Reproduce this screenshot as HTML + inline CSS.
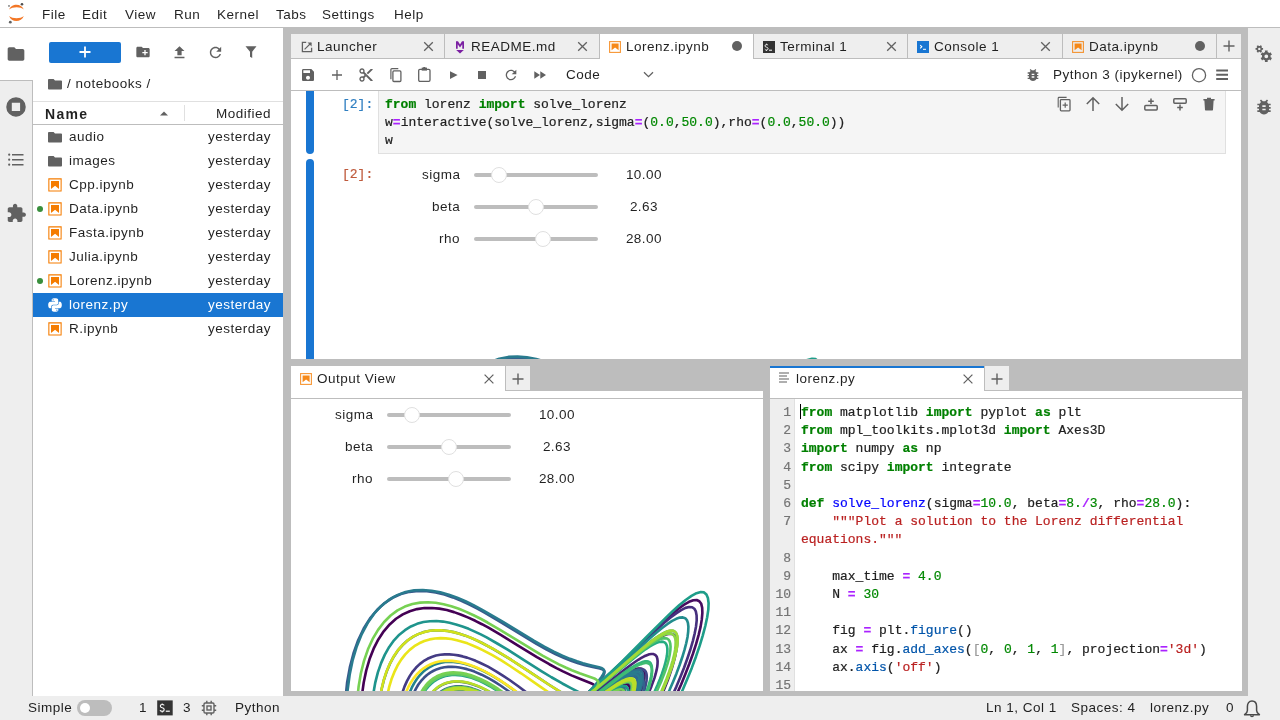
<!DOCTYPE html>
<html><head><meta charset="utf-8">
<style>
*{box-sizing:border-box;margin:0;padding:0}
html,body{width:1280px;height:720px;overflow:hidden;background:#bdbdbd;font-family:"Liberation Sans",sans-serif;font-size:13px;color:rgba(0,0,0,.87)}
.a{position:absolute}
.t{will-change:transform;position:absolute;white-space:pre;letter-spacing:.49px;line-height:24px;height:24px;font-size:13.5px;margin-top:1px}
.t.m{font-family:"Liberation Mono",monospace;letter-spacing:0;white-space:pre;font-size:13px;margin-top:2px;-webkit-text-stroke:.2px}
svg{position:absolute;overflow:visible}
.ic{fill:#616161}
</style></head><body>

<!-- menu bar -->
<div class="a" style="left:0;top:0;width:1280px;height:28px;background:#fff;border-bottom:1px solid #bdbdbd"></div>

<svg style="left:0;top:0" width="32" height="28" viewBox="0 0 32 28">
<path d="M9.2 9.6 C11 3.2 21.5 3.0 23.8 9.4 C20.5 6.6 12.5 6.6 9.2 9.6 Z" fill="#f37726"/>
<path d="M9.2 16.0 C12.5 19.0 20.5 19.0 23.8 16.0 C21.5 22.6 11 22.6 9.2 16.0 Z" fill="#f37726"/>
<circle cx="22" cy="4.2" r="1.3" fill="#4e4e4e"/>
<circle cx="9" cy="5.9" r="0.9" fill="#767677"/>
<circle cx="10.3" cy="22.2" r="1.4" fill="#616262"/>
</svg>
<div class="t" style="left:42px;top:1px;line-height:26px">File</div>
<div class="t" style="left:82px;top:1px;line-height:26px">Edit</div>
<div class="t" style="left:125px;top:1px;line-height:26px">View</div>
<div class="t" style="left:174px;top:1px;line-height:26px">Run</div>
<div class="t" style="left:217px;top:1px;line-height:26px">Kernel</div>
<div class="t" style="left:276px;top:1px;line-height:26px">Tabs</div>
<div class="t" style="left:322px;top:1px;line-height:26px">Settings</div>
<div class="t" style="left:394px;top:1px;line-height:26px">Help</div>


<!-- left activity bar -->
<div class="a" style="left:0;top:28px;width:33px;height:668px;background:#eee;border-right:1px solid #bdbdbd"></div>
<div class="a" style="left:0;top:28px;width:33px;height:53px;background:#fff;border-bottom:1px solid #bdbdbd"></div>

<!-- file browser -->
<div class="a" style="left:33px;top:28px;width:250px;height:668px;background:#fff"></div>
<svg style="left:6px;top:43.5px" width="20" height="20" viewBox="0 0 24 24"><path class="ic" d="M10 4H4c-1.1 0-1.99.9-1.99 2L2 18c0 1.1.9 2 2 2h16c1.1 0 2-.9 2-2V8c0-1.1-.9-2-2-2h-8l-2-2z"/></svg><svg style="left:6px;top:97px" width="20" height="20" viewBox="0 0 20 20"><path fill="#616161" fill-rule="evenodd" d="M10 0.2A9.75 9.75 0 1 1 10 19.7A9.75 9.75 0 1 1 10 0.2ZM5.8 5.8V14.1H14.1V5.8Z"/></svg><svg style="left:7px;top:151px" width="18" height="18" viewBox="0 0 18 18"><g fill="#616161"><circle cx="2.2" cy="3.7" r="1.1"/><circle cx="2.2" cy="8.7" r="1.1"/><circle cx="2.2" cy="13.7" r="1.1"/><rect x="5" y="3" width="11.5" height="1.5"/><rect x="5" y="8" width="11.5" height="1.5"/><rect x="5" y="13" width="11.5" height="1.5"/></g></svg><svg style="left:6.3px;top:203px" width="20.8" height="20.8" viewBox="0 0 24 24"><path class="ic" d="M20.5 11H19V7c0-1.1-.9-2-2-2h-4V3.5C13 2.12 11.88 1 10.5 1S8 2.12 8 3.5V5H4c-1.1 0-1.99.9-1.99 2v3.8H3.5c1.49 0 2.7 1.21 2.7 2.7s-1.21 2.7-2.7 2.7H2V20c0 1.1.9 2 2 2h3.8v-1.5c0-1.49 1.21-2.7 2.7-2.7 1.49 0 2.7 1.21 2.7 2.7V22H17c1.1 0 2-.9 2-2v-4h1.5c1.38 0 2.5-1.12 2.5-2.5S21.88 11 20.5 11z"/></svg><div class="a" style="left:49px;top:42px;width:72px;height:21px;background:#1976d2;border-radius:2px"></div><svg style="left:77px;top:44px" width="16" height="16" viewBox="0 0 16 16"><path d="M8 2.5v11M2.5 8h11" stroke="#fff" stroke-width="1.8"/></svg><svg style="left:134.7px;top:44.1px" width="16" height="16" viewBox="0 0 24 24"><path class="ic" d="M20 6h-8l-2-2H4c-1.11 0-1.99.89-1.99 2L2 18c0 1.11.89 2 2 2h16c1.11 0 2-.89 2-2V8c0-1.11-.89-2-2-2zm-1 8h-3v3h-2v-3h-3v-2h3V9h2v3h3v2z"/></svg><svg style="left:170.5px;top:43.9px" width="17" height="17" viewBox="0 0 24 24"><path class="ic" d="M9 16h6v-6h4l-7-7-7 7h4zm-4 2h14v2H5z"/></svg><svg style="left:206.5px;top:43.7px" width="17" height="17" viewBox="0 0 24 24"><path class="ic" d="M17.65 6.35C16.2 4.9 14.21 4 12 4c-4.42 0-7.99 3.58-7.99 8s3.57 8 7.99 8c3.73 0 6.84-2.55 7.73-6h-2.08c-.82 2.33-3.04 4-5.65 4-3.31 0-6-2.69-6-6s2.69-6 6-6c1.66 0 3.14.69 4.22 1.78L13 11h7V4l-2.35 2.35z"/></svg><svg style="left:243px;top:44px" width="16" height="16" viewBox="0 0 16 16"><path class="ic" d="M2.5 2.2h11l-4.3 5.5v6.2l-2.2 -1.2v-5z"/></svg><svg style="left:48.2px;top:78.6px" width="14" height="10.5" viewBox="0 0 14 10.5"><path fill="#616161" d="M0.9 0H5.6L7 1.4H13.1Q14 1.4 14 2.3V9.6Q14 10.5 13.1 10.5H0.9Q0 10.5 0 9.6V0.9Q0 0 0.9 0Z"/></svg><div class="t" style="left:67px;top:71px">/ notebooks /</div><div class="a" style="left:33px;top:101px;width:250px;height:24px;border-top:1px solid #e0e0e0;border-bottom:1px solid #bdbdbd"></div><div class="t" style="left:45px;top:101px;font-weight:bold;letter-spacing:1.3px;font-size:14px">Name</div><svg style="left:159px;top:109px" width="10" height="8" viewBox="0 0 10 8"><path d="M1 6.5L5 2.5L9 6.5z" fill="#616161"/></svg><div class="a" style="left:184px;top:105px;width:1px;height:16px;background:#e0e0e0"></div><div class="t" style="right:1009px;top:101px">Modified</div><svg style="left:48px;top:131.8px" width="14" height="10.5" viewBox="0 0 14 10.5"><path fill="#616161" d="M0.9 0H5.6L7 1.4H13.1Q14 1.4 14 2.3V9.6Q14 10.5 13.1 10.5H0.9Q0 10.5 0 9.6V0.9Q0 0 0.9 0Z"/></svg><div class="t" style="left:69px;top:124px;color:rgba(0,0,0,.87)">audio</div><div class="t" style="right:1009px;top:124px;color:rgba(0,0,0,.87)">yesterday</div><svg style="left:48px;top:155.6px" width="14" height="10.5" viewBox="0 0 14 10.5"><path fill="#616161" d="M0.9 0H5.6L7 1.4H13.1Q14 1.4 14 2.3V9.6Q14 10.5 13.1 10.5H0.9Q0 10.5 0 9.6V0.9Q0 0 0.9 0Z"/></svg><div class="t" style="left:69px;top:148px;color:rgba(0,0,0,.87)">images</div><div class="t" style="right:1009px;top:148px;color:rgba(0,0,0,.87)">yesterday</div><svg style="left:47px;top:177px" width="16" height="16" viewBox="0 0 22 22"><g fill="#f57c00"><path d="M18.7 3.3v15.4H3.3V3.3h15.4m1.5-1.5H1.8v18.3h18.3l.1-18.3z"/><path d="M16.5 16.5l-5.4-4.3-5.6 4.3v-11h11z"/></g></svg><div class="t" style="left:69px;top:172px;color:rgba(0,0,0,.87)">Cpp.ipynb</div><div class="t" style="right:1009px;top:172px;color:rgba(0,0,0,.87)">yesterday</div><div class="a" style="left:37px;top:206px;width:6px;height:6px;border-radius:3px;background:#388e3c"></div><svg style="left:47px;top:201px" width="16" height="16" viewBox="0 0 22 22"><g fill="#f57c00"><path d="M18.7 3.3v15.4H3.3V3.3h15.4m1.5-1.5H1.8v18.3h18.3l.1-18.3z"/><path d="M16.5 16.5l-5.4-4.3-5.6 4.3v-11h11z"/></g></svg><div class="t" style="left:69px;top:196px;color:rgba(0,0,0,.87)">Data.ipynb</div><div class="t" style="right:1009px;top:196px;color:rgba(0,0,0,.87)">yesterday</div><svg style="left:47px;top:225px" width="16" height="16" viewBox="0 0 22 22"><g fill="#f57c00"><path d="M18.7 3.3v15.4H3.3V3.3h15.4m1.5-1.5H1.8v18.3h18.3l.1-18.3z"/><path d="M16.5 16.5l-5.4-4.3-5.6 4.3v-11h11z"/></g></svg><div class="t" style="left:69px;top:220px;color:rgba(0,0,0,.87)">Fasta.ipynb</div><div class="t" style="right:1009px;top:220px;color:rgba(0,0,0,.87)">yesterday</div><svg style="left:47px;top:249px" width="16" height="16" viewBox="0 0 22 22"><g fill="#f57c00"><path d="M18.7 3.3v15.4H3.3V3.3h15.4m1.5-1.5H1.8v18.3h18.3l.1-18.3z"/><path d="M16.5 16.5l-5.4-4.3-5.6 4.3v-11h11z"/></g></svg><div class="t" style="left:69px;top:244px;color:rgba(0,0,0,.87)">Julia.ipynb</div><div class="t" style="right:1009px;top:244px;color:rgba(0,0,0,.87)">yesterday</div><div class="a" style="left:37px;top:278px;width:6px;height:6px;border-radius:3px;background:#388e3c"></div><svg style="left:47px;top:273px" width="16" height="16" viewBox="0 0 22 22"><g fill="#f57c00"><path d="M18.7 3.3v15.4H3.3V3.3h15.4m1.5-1.5H1.8v18.3h18.3l.1-18.3z"/><path d="M16.5 16.5l-5.4-4.3-5.6 4.3v-11h11z"/></g></svg><div class="t" style="left:69px;top:268px;color:rgba(0,0,0,.87)">Lorenz.ipynb</div><div class="t" style="right:1009px;top:268px;color:rgba(0,0,0,.87)">yesterday</div><div class="a" style="left:33px;top:293px;width:250px;height:24px;background:#1976d2"></div><svg style="left:47px;top:297px" width="16" height="16" viewBox="0 0 16 16"><g fill="#fff"><path d="M7.9 1.2c-3.4 0-3.2 1.5-3.2 1.5v1.5h3.3v.5H3.4S1.2 4.4 1.2 7.9s1.9 3.3 1.9 3.3h1.2V9.6s-.1-1.9 1.9-1.9h3.2s1.8 0 1.8-1.8V2.9s.3-1.7-3.3-1.7zM6.1 2.2c.3 0 .6.3.6.6s-.3.6-.6.6-.6-.3-.6-.6.3-.6.6-.6z"/><path d="M8.1 14.8c3.4 0 3.2-1.5 3.2-1.5v-1.5H8v-.5h4.6s2.2.2 2.2-3.3-1.9-3.3-1.9-3.3h-1.2v1.6s.1 1.9-1.9 1.9H6.6s-1.8 0-1.8 1.8v3s-.3 1.8 3.3 1.8zm1.8-1c-.3 0-.6-.3-.6-.6s.3-.6.6-.6.6.3.6.6-.3.6-.6.6z"/></g></svg><div class="t" style="left:69px;top:292px;color:#fff">lorenz.py</div><div class="t" style="right:1009px;top:292px;color:#fff">yesterday</div><svg style="left:47px;top:321px" width="16" height="16" viewBox="0 0 22 22"><g fill="#f57c00"><path d="M18.7 3.3v15.4H3.3V3.3h15.4m1.5-1.5H1.8v18.3h18.3l.1-18.3z"/><path d="M16.5 16.5l-5.4-4.3-5.6 4.3v-11h11z"/></g></svg><div class="t" style="left:69px;top:316px;color:rgba(0,0,0,.87)">R.ipynb</div><div class="t" style="right:1009px;top:316px;color:rgba(0,0,0,.87)">yesterday</div>

<!-- main dock -->
<div class="a" style="left:291px;top:34px;width:950px;height:25px;background:#eee;border-bottom:1px solid #bdbdbd"></div>
<div class="a" style="left:291px;top:59px;width:950px;height:300px;background:#fff"></div>
<div class="a" style="left:291px;top:90px;width:950px;height:1px;background:#bdbdbd"></div>

<div class="a" style="left:291px;top:34px;width:154px;height:24px;background:#eee;border-right:1px solid #bdbdbd"></div><svg style="left:301px;top:41px" width="12" height="12" viewBox="0 0 12 12"><path d="M5.2 1.4H1.4V10.6H10.6V6.8" fill="none" stroke="#616161" stroke-width="1.3"/><path d="M3.6 8.4L10 2" stroke="#616161" stroke-width="1.1"/><path d="M6.5 1.4H10.6V5.5Z" fill="#616161"/></svg><div class="t" style="left:317px;top:34px;color:rgba(0,0,0,.87)">Launcher</div><svg style="left:422.5px;top:41px" width="11" height="11" viewBox="0 0 11 11"><path d="M1.2 1.2L9.8 9.8M9.8 1.2L1.2 9.8" stroke="#616161" stroke-width="1.3"/></svg><div class="a" style="left:445px;top:34px;width:155px;height:24px;background:#eee;border-right:1px solid #bdbdbd"></div><svg style="left:455px;top:40px" width="10" height="14" viewBox="0 0 10 14"><path d="M1 8.8V1.2H3L5 4.6L7 1.2H9V8.8H7.3V4.2L5 7.6L2.7 4.2V8.8Z" fill="#7b1fa2"/><path d="M1.2 10H8.8L5 13.4Z" fill="#7b1fa2"/></svg><div class="t" style="left:471px;top:34px;color:rgba(0,0,0,.87)">README.md</div><svg style="left:576.5px;top:41px" width="11" height="11" viewBox="0 0 11 11"><path d="M1.2 1.2L9.8 9.8M9.8 1.2L1.2 9.8" stroke="#616161" stroke-width="1.3"/></svg><div class="a" style="left:600px;top:34px;width:154px;height:25px;background:#fff;border-right:1px solid #bdbdbd"></div><svg style="left:609px;top:41px" width="12" height="12" viewBox="0 0 12 12"><rect x="0.6" y="0.6" width="10.8" height="10.8" fill="none" stroke="#f57c00" stroke-opacity=".8" stroke-width="1.1"/><path d="M2.6 2.4H9.6V9.2L6.1 6.6L2.6 9.2Z" fill="#f57c00" fill-opacity=".9"/></svg><div class="t" style="left:626px;top:34px;color:rgba(0,0,0,.87)">Lorenz.ipynb</div><div class="a" style="left:732px;top:41px;width:10px;height:10px;border-radius:5px;background:#616161"></div><div class="a" style="left:754px;top:34px;width:154px;height:24px;background:#eee;border-right:1px solid #bdbdbd"></div><svg style="left:763px;top:41px" width="12" height="12" viewBox="0 0 12 12"><rect width="12" height="12" fill="#333"/><path d="M5.1 4.3Q4.8 3.6 3.5 3.6Q2 3.6 2 4.9Q2 5.9 3.5 6.2Q5.1 6.5 5.1 7.7Q5.1 9 3.5 9Q2.2 9 1.8 8.2M3.5 2.7V3.6M3.5 9V9.9" fill="none" stroke="#fff" stroke-width="0.9"/><rect x="6" y="8.7" width="3" height="1" fill="#fff"/></svg><div class="t" style="left:780px;top:34px;color:rgba(0,0,0,.87)">Terminal 1</div><svg style="left:885.5px;top:41px" width="11" height="11" viewBox="0 0 11 11"><path d="M1.2 1.2L9.8 9.8M9.8 1.2L1.2 9.8" stroke="#616161" stroke-width="1.3"/></svg><div class="a" style="left:908px;top:34px;width:155px;height:24px;background:#eee;border-right:1px solid #bdbdbd"></div><svg style="left:917px;top:41px" width="12" height="12" viewBox="0 0 12 12"><rect width="12" height="12" fill="#1976d2"/><path d="M3.2 4.2L4.8 5.7L3.2 7.3" fill="none" stroke="#fff" stroke-width="1.1"/><rect x="6" y="7.8" width="3" height="1" fill="#fff"/></svg><div class="t" style="left:934px;top:34px;color:rgba(0,0,0,.87)">Console 1</div><svg style="left:1039.5px;top:41px" width="11" height="11" viewBox="0 0 11 11"><path d="M1.2 1.2L9.8 9.8M9.8 1.2L1.2 9.8" stroke="#616161" stroke-width="1.3"/></svg><div class="a" style="left:1063px;top:34px;width:154px;height:24px;background:#eee;border-right:1px solid #bdbdbd"></div><svg style="left:1072px;top:41px" width="12" height="12" viewBox="0 0 12 12"><rect x="0.6" y="0.6" width="10.8" height="10.8" fill="none" stroke="#f57c00" stroke-opacity=".8" stroke-width="1.1"/><path d="M2.6 2.4H9.6V9.2L6.1 6.6L2.6 9.2Z" fill="#f57c00" fill-opacity=".9"/></svg><div class="t" style="left:1089px;top:34px;color:rgba(0,0,0,.87)">Data.ipynb</div><div class="a" style="left:1195px;top:41px;width:10px;height:10px;border-radius:5px;background:#616161"></div><svg style="left:1222px;top:39px" width="14" height="14" viewBox="0 0 14 14"><path d="M7 1.5V12.5M1.5 7H12.5" stroke="#616161" stroke-width="1.4"/></svg><svg style="left:300px;top:67px" width="16" height="16" viewBox="0 0 24 24"><path class="ic" d="M17 3H5c-1.11 0-2 .9-2 2v14c0 1.1.89 2 2 2h14c1.1 0 2-.9 2-2V7l-4-4zm-5 16c-1.66 0-3-1.34-3-3s1.34-3 3-3 3 1.34 3 3-1.34 3-3 3zm3-10H5V5h10v4z"/></svg><svg style="left:331px;top:69px" width="12" height="12" viewBox="0 0 12 12"><path d="M6 1V11M1 6H11" stroke="#616161" stroke-width="1.3"/></svg><svg style="left:358px;top:67px" width="16" height="16" viewBox="0 0 24 24"><path class="ic" d="M9.64 7.64c.23-.5.36-1.05.36-1.64 0-2.21-1.79-4-4-4S2 3.79 2 6s1.79 4 4 4c.59 0 1.14-.13 1.64-.36L10 12l-2.36 2.36C7.14 14.13 6.59 14 6 14c-2.21 0-4 1.79-4 4s1.79 4 4 4 4-1.79 4-4c0-.59-.13-1.14-.36-1.64L12 14l7 7h3v-1L9.64 7.64zM6 8c-1.1 0-2-.89-2-2s.9-2 2-2 2 .89 2 2-.9 2-2 2zm0 12c-1.1 0-2-.89-2-2s.9-2 2-2 2 .89 2 2-.9 2-2 2zm6-7.5c-.28 0-.5-.22-.5-.5s.22-.5.5-.5.5.22.5.5-.22.5-.5.5zM19 3l-6 6 2 2 7-7V3z"/></svg><svg style="left:387px;top:67px" width="16" height="16" viewBox="0 0 16 16"><path d="M3.9 12.2V2.6Q3.9 1.6 4.9 1.6H11.3" fill="none" stroke="#616161" stroke-width="1.2"/><rect x="5.9" y="3.9" width="8" height="10.6" rx="1" fill="none" stroke="#616161" stroke-width="1.3"/></svg><svg style="left:417px;top:66px" width="16" height="16" viewBox="0 0 16 16"><rect x="1.7" y="3.3" width="11.3" height="12" rx="1.2" fill="none" stroke="#616161" stroke-width="1.3"/><rect x="4.7" y="1.6" width="5.3" height="3" fill="#616161"/><rect x="6.3" y="1" width="2" height="1.5" fill="#616161"/></svg><svg style="left:449px;top:70px" width="10" height="10" viewBox="0 0 10 10"><path d="M1 1.3L8.6 5.1L1 8.9Z" fill="#616161"/></svg><div class="a" style="left:478px;top:71px;width:8px;height:8px;background:#616161"></div><svg style="left:503px;top:67px" width="16" height="16" viewBox="0 0 24 24"><path class="ic" d="M17.65 6.35C16.2 4.9 14.21 4 12 4c-4.42 0-7.99 3.58-7.99 8s3.57 8 7.99 8c3.73 0 6.84-2.55 7.73-6h-2.08c-.82 2.33-3.04 4-5.65 4-3.31 0-6-2.69-6-6s2.69-6 6-6c1.66 0 3.14.69 4.22 1.78L13 11h7V4l-2.35 2.35z"/></svg><svg style="left:534px;top:71px" width="13" height="8" viewBox="0 0 13 8"><path d="M0.3 0.3L6 4L0.3 7.7ZM6.3 0.3L12 4L6.3 7.7Z" fill="#616161"/></svg><div class="t" style="left:566px;top:62px">Code</div><svg style="left:643px;top:71px" width="11" height="7" viewBox="0 0 11 7"><path d="M1 1.2L5.5 5.6L10 1.2" fill="none" stroke="#616161" stroke-width="1.3"/></svg><svg style="left:1025px;top:67px" width="16" height="16" viewBox="0 0 24 24"><path class="ic" d="M20 8h-2.81c-.45-.78-1.07-1.45-1.82-1.96L17 4.41 15.59 3l-2.17 2.17C12.96 5.06 12.49 5 12 5c-.49 0-.96.06-1.41.17L8.41 3 7 4.41l1.62 1.63C7.88 6.55 7.26 7.22 6.81 8H4v2h2.09c-.05.33-.09.66-.09 1v1H4v2h2v1c0 .34.04.67.09 1H4v2h2.81c1.04 1.79 2.97 3 5.19 3s4.15-1.21 5.19-3H20v-2h-2.09c.05-.33.09-.66.09-1v-1h2v-2h-2v-1c0-.34-.04-.67-.09-1H20V8zm-6 8h-4v-2h4v2zm0-4h-4v-2h4v2z"/></svg><div class="t" style="left:1053px;top:62px">Python 3 (ipykernel)</div><svg style="left:1191px;top:67px" width="16" height="16" viewBox="0 0 16 16"><circle cx="8" cy="8.2" r="6.6" fill="none" stroke="#616161" stroke-width="1.3"/></svg><svg style="left:1214px;top:67px" width="16" height="16" viewBox="0 0 16 16"><path d="M2.2 3.6H14M2.2 7.8H14M2.2 12H14" stroke="#616161" stroke-width="2"/></svg>
<div class="a" style="left:291px;top:91px;width:950px;height:268px;overflow:hidden"><div class="a" style="left:-291px;top:-91px;width:1280px;height:720px"><div class="a" style="left:306px;top:86px;width:8px;height:68px;background:#1976d2;border-radius:0 0 4px 4px"></div><div class="a" style="left:306px;top:159px;width:8px;height:210px;background:#1976d2;border-radius:4px"></div><div class="a" style="left:378px;top:80px;width:848px;height:74px;background:#f5f5f5;border:1px solid #e0e0e0"></div><div class="t m" style="left:342px;top:94px;line-height:18.2px;color:#307fc1">[2]:</div><div class="t m" style="left:385px;top:94px;line-height:18.2px;height:60px;color:#212121"><b style="color:#008000">from</b> lorenz <b style="color:#008000">import</b> solve_lorenz
w<b style="color:#aa22ff">=</b>interactive(solve_lorenz,sigma<b style="color:#aa22ff">=</b>(<span style="color:#008800">0.0</span>,<span style="color:#008800">50.0</span>),rho<b style="color:#aa22ff">=</b>(<span style="color:#008800">0.0</span>,<span style="color:#008800">50.0</span>))
w</div><svg style="left:1056px;top:96px" width="16" height="16" viewBox="0 0 16 16"><path d="M2.2 11.6V2.2Q2.2 1.4 3 1.4H10.6" fill="none" stroke="#616161" stroke-width="1.1"/><rect x="4.4" y="3.6" width="9.6" height="11.2" rx=".8" fill="none" stroke="#616161" stroke-width="1.3"/><path d="M9.2 6.6V11.8M6.6 9.2H11.8" stroke="#616161" stroke-width="1.2"/></svg><svg style="left:1085px;top:96px" width="16" height="16" viewBox="0 0 16 16"><path d="M8 15V2.5M1.8 8L8 1.8L14.2 8" fill="none" stroke="#616161" stroke-width="1.5"/></svg><svg style="left:1114px;top:96px" width="16" height="16" viewBox="0 0 16 16"><path d="M8 1V13.5M1.8 8L8 14.2L14.2 8" fill="none" stroke="#616161" stroke-width="1.5"/></svg><svg style="left:1143px;top:96px" width="16" height="16" viewBox="0 0 16 16"><rect x="1.8" y="9.6" width="12.4" height="4.4" rx=".9" fill="none" stroke="#616161" stroke-width="1.5"/><path d="M8 2.4V8M5.2 5.2H10.8" stroke="#616161" stroke-width="1.5"/></svg><svg style="left:1172px;top:96px" width="16" height="16" viewBox="0 0 16 16"><rect x="1.8" y="2.8" width="12.4" height="4.4" rx=".9" fill="none" stroke="#616161" stroke-width="1.5"/><path d="M8 8.6V14.4M5.2 11.6H10.8" stroke="#616161" stroke-width="1.5"/></svg><svg style="left:1201px;top:96px" width="16" height="16" viewBox="0 0 16 16"><path d="M2.4 3H13.6V4.4H2.4ZM6 1.8H10V3H6ZM3.4 4.4H12.6L12 14Q11.9 14.4 11.4 14.4H4.6Q4.1 14.4 4 14Z" fill="#616161"/></svg><svg style="left:378px;top:255.5px" width="500" height="103" viewBox="0 0 500 103"><g fill="none" stroke-width="2.78" stroke-linecap="square" stroke-linejoin="round"><path d="M107.5 108.9 116.4 105.0 125.5 102.6 134.7 101.6 144.0 101.9 153.3 103.3 162.5 105.5 171.5 108.5" stroke="#38598c"/>
<path d="M103.8 110.9 112.4 106.1 121.3 102.8 130.4 101.0 139.6 100.6 148.9 101.4 158.1 103.1 167.2 105.7 176.1 108.9" stroke="#297b8e"/>
<path d="M441.7 109.2 440.1 105.4 437.6 103.2 434.1 102.8 429.6 104.0 424.3 106.9 418.1 111.2" stroke="#1e9d89"/></g></svg><div class="t m" style="left:342px;top:164px;line-height:18.2px;color:#bf5b3d">[2]:</div><div class="t" style="right:820px;top:162px;text-align:right">sigma</div><div class="a" style="left:474px;top:173px;width:124px;height:4px;border-radius:2px;background:#bdbdbd"></div><div class="a" style="left:490.6px;top:167px;width:16px;height:16px;border-radius:8px;background:#fff;border:1px solid #e0e0e0"></div><div class="t" style="left:604px;top:162px;width:80px;text-align:center">10.00</div><div class="t" style="right:820px;top:194px;text-align:right">beta</div><div class="a" style="left:474px;top:205px;width:124px;height:4px;border-radius:2px;background:#bdbdbd"></div><div class="a" style="left:527.5px;top:199px;width:16px;height:16px;border-radius:8px;background:#fff;border:1px solid #e0e0e0"></div><div class="t" style="left:604px;top:194px;width:80px;text-align:center">2.63</div><div class="t" style="right:820px;top:226px;text-align:right">rho</div><div class="a" style="left:474px;top:237px;width:124px;height:4px;border-radius:2px;background:#bdbdbd"></div><div class="a" style="left:535.3px;top:231px;width:16px;height:16px;border-radius:8px;background:#fff;border:1px solid #e0e0e0"></div><div class="t" style="left:604px;top:226px;width:80px;text-align:center">28.00</div>
</div></div>
<!-- bottom left panel -->
<div class="a" style="left:291px;top:391px;width:472px;height:300px;background:#fff"></div>
<div class="a" style="left:291px;top:398px;width:472px;height:1px;background:#bdbdbd"></div>

<!-- bottom right panel -->
<div class="a" style="left:770px;top:391px;width:472px;height:300px;background:#fff"></div>
<div class="a" style="left:770px;top:398px;width:472px;height:1px;background:#bdbdbd"></div>

<div class="a" style="left:291px;top:366px;width:214px;height:32px;background:#fff"></div><svg style="left:300px;top:373px" width="12" height="12" viewBox="0 0 12 12"><rect x="0.6" y="0.6" width="10.8" height="10.8" fill="none" stroke="#f57c00" stroke-opacity=".8" stroke-width="1.1"/><path d="M2.6 2.4H9.6V9.2L6.1 6.6L2.6 9.2Z" fill="#f57c00" fill-opacity=".9"/></svg><div class="t" style="left:317px;top:366px">Output View</div><svg style="left:484px;top:374px" width="10" height="10" viewBox="0 0 10 10"><path d="M0.6 0.6L9.4 9.4M9.4 0.6L0.6 9.4" stroke="#616161" stroke-width="1.25"/></svg><div class="a" style="left:505px;top:366px;width:25px;height:25px;background:#eee;border-left:1px solid #bdbdbd;border-bottom:1px solid #bdbdbd"></div><svg style="left:511px;top:371.5px" width="14" height="14" viewBox="0 0 14 14"><path d="M7 1.5V12.5M1.5 7H12.5" stroke="#616161" stroke-width="1.4"/></svg><div class="t" style="right:907px;top:402px;text-align:right">sigma</div><div class="a" style="left:387px;top:413px;width:124px;height:4px;border-radius:2px;background:#bdbdbd"></div><div class="a" style="left:403.6px;top:407px;width:16px;height:16px;border-radius:8px;background:#fff;border:1px solid #e0e0e0"></div><div class="t" style="left:517px;top:402px;width:80px;text-align:center">10.00</div><div class="t" style="right:907px;top:434px;text-align:right">beta</div><div class="a" style="left:387px;top:445px;width:124px;height:4px;border-radius:2px;background:#bdbdbd"></div><div class="a" style="left:440.5px;top:439px;width:16px;height:16px;border-radius:8px;background:#fff;border:1px solid #e0e0e0"></div><div class="t" style="left:517px;top:434px;width:80px;text-align:center">2.63</div><div class="t" style="right:907px;top:466px;text-align:right">rho</div><div class="a" style="left:387px;top:477px;width:124px;height:4px;border-radius:2px;background:#bdbdbd"></div><div class="a" style="left:448.3px;top:471px;width:16px;height:16px;border-radius:8px;background:#fff;border:1px solid #e0e0e0"></div><div class="t" style="left:517px;top:466px;width:80px;text-align:center">28.00</div><div class="a" style="left:291px;top:399px;width:472px;height:292px;overflow:hidden"><svg style="left:0;top:96px" width="472" height="200" viewBox="0 0 500 211.9"><g fill="none" stroke-width="2.78" stroke-linecap="square" stroke-linejoin="round"><path d="M74.1 226.2 75.1 212.2 77.0 198.7 79.7 185.8 83.2 173.8 87.5 162.8 92.5 153.0 98.2 144.4 104.5 137.1 111.2 131.1 118.4 126.5 125.8 123.1 133.5 120.9 141.3 119.8 149.2 119.7 157.1 120.4 165.0 121.9 172.7 124.1 180.4 126.8 187.9 129.9 195.2 133.3 202.3 136.9 209.2 140.6 222.2 148.2 240.1 159.2 260.5 171.8 273.6 179.3 281.2 183.4 288.1 186.9 297.1 191.1 304.6 194.1 317.8 199.4 319.8 200.4 321.3 201.5 322.3 202.6 322.8 203.8 323.0 205.1 322.8 206.5 322.3 208.0 320.9 210.6 319.0 213.5 315.8 217.7M347.8 216.0 347.6 214.4 347.0 213.1 346.1 212.3 344.8 211.9 343.1 211.9 341.2 212.3 339.0 213.0 335.2 214.8 331.1 217.2M351.8 215.9 352.2 213.3 352.2 211.1 351.8 209.4 351.4 208.7 350.9 208.2 350.3 207.7 349.6 207.4 347.9 207.3 345.8 207.6 343.3 208.4 340.5 209.6 335.9 212.1 330.8 215.4M356.5 217.0 357.8 212.9 358.7 209.3 359.0 206.2 358.8 203.7 358.4 202.7 358.0 201.9 357.4 201.3 356.6 200.8 355.7 200.5 354.7 200.3 353.6 200.4 350.9 200.9 347.8 202.1 344.3 203.9 340.5 206.1 334.3 210.1 327.8 214.7 318.9 221.3M365.6 219.7 368.7 212.6 371.3 205.8 373.2 199.7 374.3 194.3 374.5 192.0 374.5 189.9 374.3 188.2 373.8 186.7 373.1 185.5 372.2 184.6 371.1 184.1 369.7 183.8 368.1 183.9 366.3 184.2 364.2 184.9 362.1 185.8 357.1 188.3 351.7 191.7 345.7 195.8 336.3 202.8 317.0 217.7" stroke="#440154"/>
<path d="M403.4 222.8 408.4 211.8 413.3 200.7 417.8 189.7 422.0 178.8 425.8 168.2 429.1 158.0 431.8 148.4 433.9 139.7 435.2 131.8 435.8 125.0 435.6 119.5 434.6 115.3 432.6 112.6 429.8 111.3 426.2 111.5 421.7 113.2 416.5 116.2 410.5 120.5 403.9 125.9 396.7 132.3 389.1 139.5 372.9 155.3 355.9 172.0 338.8 188.3 330.3 196.0 322.0 203.2 313.9 210.0 306.0 216.3M169.2 215.6 171.4 214.8 173.5 214.1 175.8 213.6 178.0 213.3 180.3 213.2 184.9 213.4 189.6 214.2 194.2 215.4M134.8 217.6 136.6 213.3 138.7 209.3 141.0 205.7 143.5 202.4 146.2 199.4 149.1 196.9 152.1 194.7 155.3 192.8 158.6 191.4 162.0 190.2 165.4 189.5 169.0 189.0 172.5 188.9 176.1 189.0 179.7 189.4 183.3 190.0 186.9 190.8 190.5 191.8 194.0 193.0 200.8 195.8 207.3 199.1 213.6 202.6 219.5 206.4 225.0 210.2 232.6 215.9M343.8 215.2 342.8 214.7 341.4 214.5 339.8 214.7 337.9 215.2M348.7 215.8 348.6 214.0 348.1 212.5 347.3 211.6 346.0 211.0 344.4 210.9 342.5 211.2 340.3 211.9 337.8 213.0 333.7 215.2" stroke="#470d60"/>
<path d="M386.5 226.1 393.1 211.3 396.1 203.9 398.9 196.8 401.4 189.8 403.6 183.1 405.4 176.8 406.9 170.9 407.9 165.5 408.5 160.7 408.6 156.5 408.2 153.0 407.3 150.3 405.9 148.4 403.9 147.3 401.5 147.0 398.6 147.4 395.2 148.7 391.3 150.6 387.1 153.2 382.5 156.4 377.6 160.1 367.0 168.8 349.8 183.6 332.2 198.7 320.6 208.2 309.5 217.0" stroke="#481a6c"/>
<path d="M373.0 222.6 377.7 212.6 381.8 202.8 385.1 193.8 386.3 189.6 387.3 185.6 388.0 182.0 388.3 178.8 388.4 176.0 388.1 173.6 387.6 171.6 386.6 170.1 385.3 169.1 383.7 168.5 381.8 168.4 379.6 168.8 377.0 169.7 374.2 170.9 371.2 172.6 367.8 174.6 360.6 179.6 352.8 185.5 340.3 195.4 319.0 212.4 306.9 221.7" stroke="#482576"/>
<path d="M399.0 223.2 403.7 213.1 408.3 203.0 412.5 192.8 416.5 182.8 420.0 173.0 423.1 163.7 425.7 154.8 427.7 146.6 429.1 139.3 429.8 132.9 429.7 127.6 428.9 123.4 427.3 120.5 425.0 118.9 421.8 118.6 417.9 119.6 413.3 121.9 408.0 125.4 402.1 129.8 395.7 135.2 388.8 141.4 374.0 155.3 350.3 177.9 334.4 192.6 326.6 199.5 318.9 206.0 311.4 212.2 304.1 217.8M154.1 215.3 156.2 213.2 158.4 211.3 160.7 209.6 163.1 208.2 165.5 207.0 168.1 206.1 170.7 205.4 173.4 204.9 176.1 204.7 178.8 204.6 181.6 204.7 184.3 205.1 189.8 206.2 195.2 207.8 200.5 210.0 205.6 212.5 210.5 215.2M360.2 215.1 361.8 210.4 362.9 206.2 363.3 202.6 363.3 201.0 363.2 199.7 362.8 198.5 362.3 197.5 361.7 196.8 360.8 196.2 359.9 195.9 358.7 195.8 357.4 195.8 356.0 196.1 352.7 197.2 348.9 199.0 344.8 201.4 340.3 204.2 333.1 209.2 323.2 216.5" stroke="#46307e"/>
<path d="M116.2 216.0 118.0 209.3 120.2 203.0 122.8 197.2 125.7 191.9 128.9 187.1 132.5 182.8 136.3 179.2 140.3 176.1 144.6 173.5 149.0 171.6 153.5 170.1 158.1 169.2 162.9 168.8 167.6 168.8 172.4 169.2 177.1 169.9 181.8 171.0 186.5 172.3 191.1 173.9 195.6 175.7 200.1 177.7 208.7 181.9 216.8 186.5 224.4 191.3 231.5 196.0 241.1 202.9 249.7 209.4 259.4 217.1" stroke="#443b84"/>
<path d="M371.0 217.2 373.6 209.9 375.4 203.1 376.6 197.1 376.8 194.5 376.9 192.2 376.7 190.1 376.3 188.4 375.6 186.9 374.7 185.8 373.6 185.0 372.3 184.5 370.7 184.3 368.9 184.5 366.9 184.9 364.7 185.7 362.4 186.7 357.2 189.5 351.4 193.1 345.2 197.4 335.5 204.5 287.2 240.8M158.1 215.1 160.2 213.3 162.4 211.8 164.7 210.4 167.0 209.3 169.5 208.5 172.0 207.8 174.5 207.4 177.1 207.2 179.7 207.1 182.3 207.2 184.9 207.5 190.2 208.6 195.4 210.2 200.4 212.2 205.3 214.6 209.9 217.2M362.5 216.4 364.7 210.8 366.3 205.6 367.3 201.1 367.5 199.1 367.6 197.3 367.4 195.8 367.1 194.4 366.6 193.3 365.9 192.5 365.0 191.8 363.9 191.4 362.6 191.3 361.2 191.4 359.6 191.7 357.8 192.3 353.9 194.0 349.4 196.5 344.6 199.6 336.7 205.0 325.7 213.2 301.9 231.4M165.8 215.1 167.9 214.0 170.1 213.1 172.3 212.3 174.6 211.8 177.0 211.5 179.4 211.3 181.8 211.3 186.6 211.8 191.4 212.8 196.2 214.4 200.8 216.2" stroke="#404588"/>
<path d="M126.4 219.9 128.1 214.6 130.1 209.7 132.4 205.1 134.9 200.8 137.8 197.0 140.8 193.7 144.0 190.7 147.5 188.2 151.0 186.2 154.8 184.5 158.6 183.3 162.5 182.5 166.5 182.1 170.5 182.0 174.5 182.2 178.5 182.7 182.5 183.5 186.5 184.5 190.4 185.7 194.3 187.1 201.9 190.4 209.1 194.1 215.9 198.0 222.3 202.1 228.3 206.3 236.6 212.4 243.8 218.4M345.6 215.4 344.9 214.4 343.9 213.8 342.5 213.6 340.9 213.7 339.0 214.2 336.8 215.1M349.7 216.7 349.9 214.4 349.8 212.6 349.2 211.2 348.2 210.2 346.9 209.7 345.2 209.7 343.1 210.1 340.7 210.9 338.1 212.1 333.7 214.6 329.0 217.6" stroke="#3c4f8a"/>
<path d="M57.7 215.5 59.4 198.7 62.3 182.7 66.2 167.7 71.1 153.9 77.0 141.5 83.7 130.8 91.1 121.8 99.1 114.5 107.5 108.9 116.4 105.0 125.5 102.6 134.7 101.6 144.0 101.9 153.3 103.3 162.5 105.5 171.5 108.5 180.4 112.1 189.0 116.1 197.4 120.4 205.5 124.8 220.8 133.9 260.0 157.7 270.8 163.7 280.6 168.7 289.5 172.7 297.4 175.9 304.4 178.3 310.6 180.0 318.3 181.9 327.2 183.8 329.5 184.5 331.0 185.4 331.6 185.9 331.9 186.5 332.1 187.1 332.0 188.5 331.4 190.3 330.2 192.4 327.5 196.0 324.0 200.3 318.4 206.5 309.0 216.6M363.7 217.6 366.3 211.3 368.3 205.6 369.6 200.5 370.2 196.1 370.1 194.3 369.9 192.7 369.5 191.3 368.9 190.2 368.1 189.4 367.1 188.9 365.8 188.6 364.4 188.5 362.8 188.8 361.0 189.3 359.1 190.0 354.7 192.1 349.9 194.9 344.6 198.4 336.1 204.5 324.4 213.3 272.8 253.1M150.3 217.1 152.2 214.5 154.3 212.2 156.5 210.1 158.8 208.3 161.3 206.8 163.8 205.5 166.5 204.5 169.2 203.7 171.9 203.1 174.7 202.8 177.5 202.7 180.4 202.8 183.3 203.1 186.1 203.5 191.8 204.9 197.3 206.9 202.7 209.3 207.9 212.0 212.8 214.9 217.5 218.0M357.3 217.7 358.9 213.3 360.0 209.3 360.5 205.8 360.5 203.0 360.3 201.8 359.9 200.8 359.4 200.0 358.7 199.4 357.8 199.0 356.9 198.7 355.8 198.6 354.5 198.8 351.6 199.5 348.3 200.9 344.5 202.9 340.5 205.3 333.9 209.7 324.7 216.3" stroke="#38598c"/>
<path d="M370.4 221.1 372.1 214.4 373.3 208.2 373.8 202.9 373.8 200.5 373.7 198.4 373.3 196.6 372.7 195.0 372.0 193.7 371.0 192.7 369.9 192.0 368.6 191.5 367.1 191.3 365.4 191.4 363.5 191.7 361.5 192.3 357.0 194.2 352.0 196.9 346.6 200.2 337.9 206.0 326.0 214.7 286.9 244.0M143.8 218.2 145.7 214.9 147.7 211.9 149.9 209.2 152.2 206.8 154.7 204.6 157.4 202.8 160.1 201.2 163.0 200.0 165.9 199.0 168.9 198.3 171.9 197.9 175.0 197.7 178.1 197.8 181.2 198.0 184.3 198.5 187.5 199.2 193.6 201.0 199.6 203.3 205.3 206.0 210.9 209.1 216.1 212.4 221.0 215.7M352.8 218.2 353.7 214.9 354.3 212.0 354.4 209.5 354.0 207.5 353.6 206.8 353.2 206.1 352.6 205.7 351.8 205.3 351.0 205.1 349.0 205.1 346.6 205.7 343.8 206.8 340.7 208.3 335.6 211.3 330.0 214.9 322.4 220.4M358.3 218.8 360.2 213.9 361.7 209.4 362.5 205.4 362.8 202.1 362.7 200.7 362.4 199.5 362.0 198.5 361.4 197.6 360.6 197.0 359.7 196.6 358.7 196.4 357.4 196.4 356.1 196.6 353.0 197.5 349.3 199.1 345.3 201.3 340.9 204.0 333.9 208.8 324.2 216.0" stroke="#33628d"/>
<path d="M356.6 217.7 357.4 214.0 357.7 210.8 357.6 208.1 357.4 207.0 357.0 206.1 356.5 205.2 355.9 204.6 355.1 204.1 354.3 203.8 353.3 203.6 352.2 203.6 349.6 204.0 346.7 205.0 343.4 206.6 339.8 208.5 334.0 212.1 327.9 216.3M362.1 216.2 364.2 210.7 365.7 205.7 366.6 201.3 366.8 199.4 366.8 197.7 366.6 196.2 366.3 194.9 365.7 193.9 365.0 193.1 364.1 192.5 363.0 192.2 361.7 192.1 360.3 192.2 358.7 192.6 355.1 193.9 350.9 196.0 346.3 198.8 341.3 202.0 333.4 207.7 322.6 215.8M161.5 215.7 163.5 214.2 165.7 212.9 168.0 211.9 170.3 211.0 172.6 210.4 175.0 209.9 177.5 209.7 180.0 209.6 182.5 209.7 187.5 210.3 192.4 211.5 197.3 213.2 202.1 215.3M365.5 217.8 368.4 211.0 370.7 204.7 372.2 199.0 372.7 196.5 373.0 194.2 373.1 192.1 372.9 190.3 372.6 188.7 372.0 187.5 371.2 186.5 370.1 185.8 368.9 185.5 367.4 185.4 365.8 185.6 363.9 186.1 361.8 186.8 357.2 189.1 352.1 192.2 346.4 195.9 337.4 202.5 321.7 214.4 298.3 232.4" stroke="#2f6b8e"/>
<path d="M94.3 215.6 96.0 205.5 98.4 195.9 101.3 187.0 104.8 178.7 108.8 171.3 113.2 164.7 118.2 159.0 123.4 154.2 129.0 150.3 134.8 147.4 140.9 145.2 147.1 143.9 153.3 143.3 159.7 143.4 166.0 144.1 172.3 145.3 178.5 147.0 184.7 149.0 190.7 151.4 196.6 154.0 202.4 156.8 213.4 162.7 223.7 168.8 233.4 174.8 250.4 185.9 273.8 201.3 286.1 209.1 308.9 223.0" stroke="#2c738e"/>
<path d="M58.9 223.9 59.9 206.9 62.1 190.4 65.3 174.9 69.6 160.4 74.9 147.3 81.1 135.7 88.0 125.7 95.6 117.5 103.8 110.9 112.4 106.1 121.3 102.8 130.4 101.0 139.6 100.6 148.9 101.4 158.1 103.1 167.2 105.7 176.1 108.9 184.8 112.6 193.3 116.7 201.6 121.1 209.5 125.6 224.6 134.5 257.2 154.4 268.3 160.7 278.4 166.0 287.5 170.3 295.6 173.6 302.9 176.2 309.2 178.2 317.2 180.3 326.4 182.5 328.8 183.3 330.5 184.2 331.0 184.8 331.4 185.4 331.6 186.0 331.7 186.7 331.4 188.4 330.5 190.4 329.1 192.6 326.2 196.6 322.5 201.0 316.7 207.5 307.1 217.7M364.9 216.6 367.5 210.2 369.5 204.3 370.8 199.1 371.2 196.8 371.3 194.7 371.3 192.8 371.0 191.2 370.6 189.9 369.9 188.8 369.0 188.0 367.9 187.5 366.6 187.3 365.1 187.3 363.4 187.6 361.6 188.2 359.5 189.0 355.0 191.3 349.9 194.4 344.4 198.1 335.7 204.4 320.6 215.9M158.5 215.7 160.6 214.0 162.8 212.4 165.0 211.1 167.3 210.1 169.7 209.2 172.2 208.6 174.7 208.1 177.3 207.9 179.8 207.8 182.4 208.0 187.6 208.7 192.7 210.0 197.8 211.8 202.7 213.9 207.4 216.4M362.5 218.6 365.0 212.6 367.0 207.0 368.3 201.9 368.9 197.7 368.9 195.8 368.8 194.2 368.4 192.9 367.9 191.7 367.1 190.9 366.2 190.3 365.0 189.9 363.7 189.8 362.2 190.0 360.5 190.4 358.6 191.0 354.5 192.9 349.8 195.5 344.8 198.8 336.6 204.6 325.2 213.1 285.1 244.0" stroke="#297b8e"/>
<path d="M123.8 215.1 125.7 209.4 127.9 204.2 130.5 199.3 133.3 195.0 136.4 191.0 139.7 187.6 143.3 184.7 147.0 182.2 150.9 180.2 154.9 178.7 159.0 177.6 163.2 177.0 167.5 176.7 171.8 176.8 176.1 177.3 180.3 178.0 184.6 179.0 188.8 180.3 193.0 181.7 197.0 183.4 204.9 187.0 212.5 191.1 219.6 195.4 226.2 199.7 232.4 204.1 240.9 210.5 248.4 216.5" stroke="#25838e"/>
<path d="M396.9 215.7 401.0 206.7 404.8 197.8 408.4 189.0 411.6 180.4 414.4 172.2 416.8 164.4 418.7 157.1 420.1 150.4 420.8 144.6 421.0 139.6 420.5 135.5 419.4 132.5 417.6 130.5 415.1 129.7 411.9 129.9 408.1 131.2 403.8 133.4 398.9 136.6 393.5 140.7 387.6 145.4 381.4 150.8 368.1 162.8 339.9 188.7 325.9 201.0 312.3 212.1 305.7 217.2" stroke="#228c8d"/>
<path d="M86.0 221.5 87.3 209.8 89.3 198.5 92.0 187.9 95.4 178.1 99.4 169.1 104.0 161.0 109.1 154.0 114.7 148.0 120.7 143.2 127.0 139.3 133.5 136.5 140.2 134.6 147.1 133.7 154.0 133.5 161.0 134.1 167.9 135.3 174.8 137.1 181.6 139.3 188.2 141.8 194.7 144.7 201.0 147.7 207.2 150.9 218.9 157.6 229.9 164.2 249.3 176.5 265.6 186.8 275.9 193.1 287.4 199.7 296.6 204.6 311.3 212.2 313.7 213.8 315.4 215.4" stroke="#1f948c"/>
<path d="M409.2 219.3 414.6 207.3 419.7 195.2 424.6 183.2 429.0 171.3 432.9 159.9 436.2 148.9 438.9 138.8 440.9 129.5 442.1 121.4 442.4 114.6 441.7 109.2 440.1 105.4 437.6 103.2 434.1 102.8 429.6 104.0 424.3 106.9 418.1 111.2 411.2 116.9 403.7 123.7 395.6 131.5 378.2 148.9 359.8 167.4 350.6 176.5 341.3 185.4 332.2 193.9 323.2 202.0 314.5 209.5 306.0 216.3M180.4 215.9 181.3 214.8 182.2 213.8 183.3 212.9 184.5 212.2 185.8 211.6 188.6 210.8 191.7 210.6 194.9 210.8 198.3 211.5 201.7 212.6 205.2 214.1 208.6 215.9M136.7 217.4 138.6 213.3 140.6 209.6 142.9 206.1 145.4 203.0 148.1 200.3 150.9 197.9 153.9 195.8 157.0 194.2 160.3 192.8 163.6 191.8 167.0 191.1 170.4 190.7 173.9 190.6 177.4 190.8 180.9 191.2 184.4 191.9 187.9 192.7 191.3 193.7 198.0 196.2 204.5 199.2 210.8 202.6 216.6 206.2 222.2 209.9 227.4 213.6 234.5 219.2M346.7 215.4 346.2 214.2 345.4 213.3 344.2 212.8 342.7 212.7 340.9 213.0 338.8 213.7 336.4 214.7 332.6 216.8M350.7 216.6 351.0 214.1 351.0 212.1 350.5 210.4 349.6 209.3 349.1 208.9 347.6 208.5 345.7 208.6 343.5 209.2 340.9 210.1 338.1 211.5 333.5 214.2 328.5 217.4M355.0 217.3 356.2 213.5 356.9 210.3 357.1 207.5 356.7 205.2 356.4 204.4 355.9 203.6 355.3 203.1 354.5 202.7 353.6 202.4 352.6 202.3 350.3 202.6 347.5 203.5 344.3 205.0 340.8 206.9 335.1 210.4 329.0 214.6 320.6 220.7" stroke="#1e9d89"/>
<path d="M386.5 222.1 390.1 214.6 393.5 207.2 396.6 199.9 399.5 192.6 402.1 185.6 404.4 178.9 406.3 172.5 407.8 166.6 408.8 161.3 409.4 156.5 409.4 152.5 409.0 149.1 408.0 146.6 406.4 144.8 404.4 143.9 401.8 143.9 398.7 144.6 395.1 146.1 391.1 148.4 386.6 151.3 381.8 154.8 376.7 158.9 365.7 168.1 324.0 204.1 312.4 213.5 301.4 221.8" stroke="#21a585"/>
<path d="M379.8 219.4 385.7 207.1 388.4 201.1 390.8 195.2 392.9 189.6 394.8 184.1 396.3 179.0 397.5 174.2 398.3 169.9 398.7 166.1 398.7 162.8 398.3 160.1 397.4 157.9 396.2 156.4 394.4 155.6 392.3 155.4 389.7 155.8 386.8 156.9 383.5 158.5 379.8 160.6 375.9 163.2 371.6 166.3 362.5 173.4 347.6 185.8 327.1 203.0 317.0 211.1 307.3 218.6" stroke="#26ad81"/>
<path d="M371.2 220.8 375.0 212.0 378.2 203.7 380.5 196.1 381.4 192.6 382.0 189.4 382.3 186.5 382.4 183.9 382.2 181.6 381.7 179.8 381.0 178.3 379.9 177.2 378.6 176.5 377.0 176.2 375.1 176.3 373.0 176.7 370.6 177.6 368.0 178.7 365.2 180.2 359.1 184.0 352.3 188.7 341.4 196.9 304.6 225.5" stroke="#31b57b"/>
<path d="M374.0 218.9 377.2 210.2 379.8 202.1 381.6 194.9 382.1 191.6 382.4 188.7 382.5 186.1 382.2 183.8 381.7 181.9 381.0 180.3 379.9 179.2 378.6 178.4 377.0 178.0 375.2 178.0 373.1 178.4 370.8 179.2 368.2 180.2 365.4 181.6 359.4 185.2 352.7 189.7 345.7 194.9 330.9 206.3 309.1 223.0M164.6 215.5 166.7 214.3 168.8 213.3 171.1 212.5 173.4 211.9 175.7 211.4 178.1 211.2 180.5 211.1 185.3 211.4 190.2 212.3 194.9 213.7 199.6 215.5" stroke="#3fbc73"/>
<path d="M383.9 215.7 387.0 209.2 389.9 202.7 392.6 196.4 395.0 190.2 397.1 184.3 398.9 178.7 400.3 173.4 401.3 168.6 401.9 164.3 402.1 160.6 401.8 157.4 401.1 154.9 399.9 153.1 398.3 152.0 396.1 151.6 393.6 151.9 390.6 152.8 387.2 154.4 383.4 156.6 379.3 159.3 374.9 162.5 365.4 170.0 355.1 178.7 328.1 201.5 317.5 210.1 307.3 218.1" stroke="#50c46a"/>
<path d="M152.2 215.6 154.2 213.3 156.4 211.2 158.7 209.3 161.1 207.8 163.6 206.4 166.1 205.3 168.8 204.5 171.5 203.9 174.3 203.5 177.0 203.4 179.9 203.4 182.7 203.7 185.5 204.1 191.1 205.4 196.6 207.2 202.0 209.5 207.1 212.2 212.0 215.0M358.0 217.5 359.7 213.0 360.8 208.8 361.5 205.2 361.5 202.2 361.3 201.0 360.9 200.0 360.4 199.1 359.7 198.5 358.8 198.0 357.8 197.7 356.7 197.7 355.4 197.8 352.5 198.5 349.1 200.0 345.3 202.0 341.1 204.5 334.4 209.0 325.0 215.8M136.6 215.5 138.5 211.5 140.7 207.8 143.1 204.4 145.7 201.3 148.4 198.6 151.4 196.3 154.4 194.4 157.7 192.8 161.0 191.5 164.4 190.6 167.8 190.1 171.3 189.8 174.9 189.8 178.4 190.0 182.0 190.6 185.5 191.3 189.0 192.2 192.5 193.3 199.3 196.0 205.8 199.1 212.0 202.5 217.9 206.2 223.5 209.9 228.7 213.7 235.7 219.4M345.5 215.4 344.8 214.4 343.8 213.8 342.4 213.6 340.8 213.8 338.9 214.3 336.7 215.1M349.7 216.6 349.9 214.4 349.7 212.6 349.1 211.2 348.1 210.2 346.7 209.8 345.0 209.8 342.9 210.2 340.6 211.1 337.9 212.3 333.5 214.7 328.8 217.7" stroke="#63cb5f"/>
<path d="M70.1 217.6 71.6 202.9 74.0 188.9 77.3 175.7 81.5 163.5 86.5 152.5 92.2 142.9 98.6 134.6 105.5 127.7 112.8 122.2 120.6 118.2 128.6 115.5 136.8 114.0 145.0 113.6 153.3 114.2 161.6 115.7 169.8 117.9 177.8 120.6 185.7 123.8 193.4 127.4 200.9 131.1 208.2 135.1 221.9 143.1 240.7 154.6 257.2 164.7 266.9 170.4 275.8 175.3 283.8 179.4 291.0 182.8 297.5 185.6 305.7 188.8 321.4 194.4 323.2 195.4 324.5 196.5 325.3 197.7 325.6 199.0 325.4 200.5 324.8 202.2 323.9 204.0 321.9 207.1 319.3 210.5 315.1 215.5M352.8 216.1 353.5 213.2 353.6 210.7 353.3 208.7 353.0 207.9 352.6 207.2 352.1 206.7 351.4 206.3 350.6 206.0 348.8 205.9 346.5 206.3 343.9 207.3 340.9 208.6 336.0 211.4 330.6 214.9 323.2 220.2M358.5 215.8 360.0 211.4 360.9 207.5 361.3 204.2 361.3 202.7 361.1 201.5 360.7 200.4 360.3 199.5 359.6 198.8 358.8 198.3 357.9 198.0 356.8 197.9 355.5 198.0 352.7 198.6 349.3 200.0 345.5 202.0 341.4 204.4 334.8 208.8 325.4 215.6M133.8 217.7 135.6 213.3 137.7 209.2 140.0 205.4 142.5 202.0 145.2 198.9 148.1 196.3 151.2 194.0 154.4 192.1 157.7 190.6 161.2 189.4 164.7 188.6 168.3 188.1 171.9 187.9 175.5 188.0 179.2 188.3 182.8 189.0 186.5 189.8 190.1 190.8 193.6 192.0 200.6 194.8 207.2 198.1 213.6 201.7 219.5 205.5 225.1 209.4 232.9 215.2" stroke="#77d153"/>
<path d="M385.4 223.1 392.1 208.7 395.1 201.6 397.9 194.6 400.4 187.8 402.6 181.3 404.4 175.1 405.9 169.4 406.9 164.1 407.4 159.5 407.5 155.5 407.1 152.2 406.2 149.6 404.7 147.9 402.8 146.9 400.3 146.7 397.4 147.2 394.0 148.6 390.1 150.6 385.9 153.3 381.3 156.5 376.4 160.3 365.8 169.0 348.8 183.7 331.3 198.7 319.8 208.2 308.7 216.9" stroke="#8bd646"/>
<path d="M388.1 219.1 391.6 211.7 394.9 204.2 398.0 196.9 400.8 189.7 403.3 182.8 405.4 176.2 407.1 170.0 408.4 164.3 409.3 159.2 409.6 154.7 409.5 150.9 408.8 147.9 407.6 145.6 405.8 144.2 403.5 143.7 400.7 143.9 397.4 145.0 393.6 146.9 389.4 149.4 384.8 152.6 379.9 156.3 369.1 165.2 351.6 180.4 333.5 196.2 321.6 206.2 310.1 215.3" stroke="#a2da37"/>
<path d="M155.0 215.6 157.1 213.6 159.3 211.7 161.5 210.2 163.9 208.8 166.4 207.8 168.9 206.9 171.5 206.3 174.2 205.9 176.9 205.7 179.6 205.6 182.3 205.8 185.0 206.2 190.4 207.3 195.7 209.0 200.9 211.2 205.9 213.6 210.7 216.4M360.3 217.5 362.3 212.3 363.8 207.6 364.6 203.4 364.9 199.9 364.8 198.4 364.4 197.2 364.0 196.1 363.3 195.3 362.5 194.7 361.5 194.3 360.3 194.1 359.0 194.2 357.5 194.5 354.1 195.6 350.2 197.4 345.9 199.9 341.2 202.9 333.8 208.1 323.5 215.8M152.8 216.5 154.8 214.2 156.9 212.2 159.1 210.3 161.4 208.8 163.9 207.4 166.4 206.4 169.0 205.5 171.7 204.9 174.4 204.5 177.1 204.3 179.8 204.4 182.6 204.6 185.4 205.0 190.9 206.2 196.3 208.0 201.6 210.2 206.7 212.8 211.5 215.6M359.1 217.0 360.9 212.2 362.2 207.9 362.8 204.1 362.9 201.0 362.7 199.7 362.3 198.6 361.7 197.7 361.0 197.0 360.2 196.6 359.2 196.3 358.0 196.2 356.7 196.3 353.6 197.1 350.0 198.7 346.0 200.8 341.7 203.5 334.7 208.2 324.9 215.3M144.5 216.4 146.4 213.2 148.5 210.3 150.8 207.7 153.3 205.4 155.8 203.4 158.6 201.7 161.4 200.3 164.3 199.2 167.2 198.4 170.3 197.8 173.4 197.5 176.5 197.4 179.6 197.6 182.7 198.0 185.9 198.5 189.0 199.3 195.1 201.2 201.1 203.7 206.8 206.5 212.3 209.7 217.5 213.0 222.3 216.4" stroke="#bade28"/>
<path d="M94.2 215.9 95.9 205.8 98.2 196.2 101.1 187.2 104.6 178.9 108.6 171.4 113.0 164.8 117.9 159.1 123.2 154.3 128.8 150.4 134.6 147.4 140.7 145.3 146.9 143.9 153.1 143.3 159.5 143.4 165.8 144.1 172.1 145.3 178.3 146.9 184.5 149.0 190.5 151.3 196.5 153.9 202.2 156.7 213.3 162.6 223.6 168.7 233.3 174.7 250.3 185.9 273.7 201.3 286.1 209.0 301.3 218.1" stroke="#d2e21b"/>
<path d="M100.6 221.6 102.0 212.4 103.9 203.6 106.4 195.3 109.4 187.7 112.8 180.7 116.7 174.4 121.0 168.9 125.7 164.1 130.6 160.2 135.8 157.1 141.2 154.7 146.8 153.0 152.5 152.0 158.2 151.7 164.0 151.9 169.8 152.6 175.6 153.8 181.3 155.4 186.9 157.2 192.4 159.4 197.9 161.8 203.1 164.3 213.3 169.7 222.8 175.3 231.6 180.9 243.7 188.9 263.6 202.7 288.0 219.6" stroke="#eae51a"/>
<path d="M119.6 215.3 121.7 209.4 124.1 203.9 126.8 198.9 129.8 194.3 133.1 190.2 136.7 186.6 140.4 183.6 144.4 181.0 148.5 179.0 152.7 177.5 157.0 176.4 161.4 175.8 165.9 175.6 170.4 175.7 174.8 176.3 179.3 177.1 183.7 178.2 188.1 179.5 192.4 181.1 196.6 182.8 204.8 186.6 212.6 190.9 219.9 195.3 226.7 199.8 236.1 206.4 244.4 212.8 253.9 220.5" stroke="#fde725"/></g></svg></div><div class="a" style="left:770px;top:366px;width:214px;height:32px;background:#fff;border-top:2px solid #1976d2"></div><svg style="left:778px;top:372px" width="14" height="12" viewBox="0 0 14 12"><path d="M1 1H11M1 4H9M1 7H11M1 10H9" stroke="#616161" stroke-width="1.2"/></svg><div class="t" style="left:796px;top:366px">lorenz.py</div><svg style="left:963px;top:374px" width="10" height="10" viewBox="0 0 10 10"><path d="M0.6 0.6L9.4 9.4M9.4 0.6L0.6 9.4" stroke="#616161" stroke-width="1.25"/></svg><div class="a" style="left:984px;top:366px;width:25px;height:25px;background:#eee;border-left:1px solid #bdbdbd;border-bottom:1px solid #bdbdbd"></div><svg style="left:990px;top:371.5px" width="14" height="14" viewBox="0 0 14 14"><path d="M7 1.5V12.5M1.5 7H12.5" stroke="#616161" stroke-width="1.4"/></svg><div class="a" style="left:770px;top:399px;width:25px;height:292px;background:#eee;border-right:1px solid #e0e0e0"></div><div class="t m" style="left:771px;top:402px;width:20px;text-align:right;line-height:18.2px;height:289px;overflow:hidden;color:#757575">1
2
3
4
5
6
7

8
9
10
11
12
13
14
15</div><div class="t m" style="left:801px;top:402px;line-height:18.2px;height:289px;overflow:hidden;color:#212121"><b style="color:#008000">from</b> matplotlib <b style="color:#008000">import</b> pyplot <b style="color:#008000">as</b> plt
<b style="color:#008000">from</b> mpl_toolkits.mplot3d <b style="color:#008000">import</b> Axes3D
<b style="color:#008000">import</b> numpy <b style="color:#008000">as</b> np
<b style="color:#008000">from</b> scipy <b style="color:#008000">import</b> integrate

<b style="color:#008000">def</b> <span style="color:#0000ff">solve_lorenz</span>(sigma<b style="color:#aa22ff">=</b><span style="color:#008800">10.0</span>, beta<b style="color:#aa22ff">=</b><span style="color:#008800">8.</span><b style="color:#aa22ff">/</b><span style="color:#008800">3</span>, rho<b style="color:#aa22ff">=</b><span style="color:#008800">28.0</span>):
    <span style="color:#ba2121">"""Plot a solution to the Lorenz differential</span>
<span style="color:#ba2121">equations."""</span>

    max_time <b style="color:#aa22ff">=</b> <span style="color:#008800">4.0</span>
    N <b style="color:#aa22ff">=</b> <span style="color:#008800">30</span>

    fig <b style="color:#aa22ff">=</b> plt.<span style="color:#0055aa">figure</span>()
    ax <b style="color:#aa22ff">=</b> fig.<span style="color:#0055aa">add_axes</span>(<span style="color:#999">[</span><span style="color:#008800">0</span>, <span style="color:#008800">0</span>, <span style="color:#008800">1</span>, <span style="color:#008800">1</span><span style="color:#999">]</span>, projection<b style="color:#aa22ff">=</b><span style="color:#ba2121">'3d'</span>)
    ax.<span style="color:#0055aa">axis</span>(<span style="color:#ba2121">'off'</span>)
</div><div class="a" style="left:800px;top:404px;width:1px;height:15px;background:#000"></div>
<!-- right activity bar -->
<div class="a" style="left:1248px;top:28px;width:32px;height:668px;background:#eee"></div>

<!-- status bar -->
<div class="a" style="left:0;top:696px;width:1280px;height:24px;background:#eee"></div>


<svg style="left:1250px;top:40px" width="28" height="28" viewBox="0 0 28 28"><path fill="#616161" fill-rule="evenodd" d="M12.08 8.08L13.08 7.95L13.08 9.85L12.08 9.72L11.40 10.90L12.01 11.70L10.37 12.65L9.98 11.72L8.62 11.72L8.23 12.65L6.59 11.70L7.20 10.90L6.52 9.72L5.52 9.85L5.52 7.95L6.52 8.08L7.20 6.90L6.59 6.10L8.23 5.15L8.62 6.08L9.98 6.08L10.37 5.15L12.01 6.10L11.40 6.90ZM10.50 8.90A1.20 1.20 0 1 0 8.10 8.90A1.20 1.20 0 1 0 10.50 8.90Z"/><path fill="#616161" fill-rule="evenodd" d="M15.05 12.08L14.87 10.58L17.73 10.58L17.55 12.08L19.33 13.11L20.54 12.20L21.97 14.68L20.58 15.27L20.58 17.33L21.97 17.92L20.54 20.40L19.33 19.49L17.55 20.52L17.73 22.02L14.87 22.02L15.05 20.52L13.27 19.49L12.06 20.40L10.63 17.92L12.02 17.33L12.02 15.27L10.63 14.68L12.06 12.20L13.27 13.11ZM18.20 16.30A1.90 1.90 0 1 0 14.40 16.30A1.90 1.90 0 1 0 18.20 16.30Z"/></svg>
<svg style="left:1254px;top:97px" width="20" height="20" viewBox="0 0 24 24"><path class="ic" d="M20 8h-2.81c-.45-.78-1.07-1.45-1.82-1.96L17 4.41 15.59 3l-2.17 2.17C12.96 5.06 12.49 5 12 5c-.49 0-.96.06-1.41.17L8.41 3 7 4.41l1.62 1.63C7.88 6.55 7.26 7.22 6.81 8H4v2h2.09c-.05.33-.09.66-.09 1v1H4v2h2v1c0 .34.04.67.09 1H4v2h2.81c1.04 1.79 2.97 3 5.19 3s4.15-1.21 5.19-3H20v-2h-2.09c.05-.33.09-.66.09-1v-1h2v-2h-2v-1c0-.34-.04-.67-.09-1H20V8zm-6 8h-4v-2h4v2zm0-4h-4v-2h4v2z"/></svg>

<div class="t" style="left:28px;top:695px">Simple</div>
<div class="a" style="left:77px;top:700px;width:35px;height:16px;border-radius:8px;background:#bdbdbd"></div>
<div class="a" style="left:80px;top:703px;width:10px;height:10px;border-radius:5px;background:#fff"></div>
<div class="t" style="left:139px;top:695px">1</div>
<svg style="left:157px;top:700px" width="16" height="16" viewBox="0 0 16 16"><rect x="0.2" y="0.4" width="15.5" height="15" fill="#333"/><path d="M7.2 5.4Q6.8 4.5 5.2 4.5Q3.3 4.5 3.3 6.1Q3.3 7.4 5.2 7.8Q7.2 8.2 7.2 9.7Q7.2 11.4 5.2 11.4Q3.5 11.4 3 10.3M5.2 3.4V4.5M5.2 11.4V12.6" fill="none" stroke="#fff" stroke-width="1.1"/><rect x="8.8" y="10.6" width="4" height="1.2" fill="#fff"/></svg>
<div class="t" style="left:183px;top:695px">3</div>
<svg style="left:201px;top:700px" width="16" height="16" viewBox="0 0 16 16"><g fill="none" stroke="#616161" stroke-width="1.4"><rect x="3" y="3" width="10" height="10" rx="1.2"/><rect x="6" y="6" width="4" height="4"/><path d="M5.8 0.8V3M10.2 0.8V3M5.8 13V15.2M10.2 13V15.2M0.8 5.8H3M0.8 10.2H3M13 5.8H15.2M13 10.2H15.2"/></g></svg>
<div class="t" style="left:235px;top:695px">Python</div>
<div class="t" style="left:986px;top:695px">Ln 1, Col 1</div>
<div class="t" style="left:1071px;top:695px">Spaces: 4</div>
<div class="t" style="left:1150px;top:695px">lorenz.py</div>
<div class="t" style="left:1226px;top:695px">0</div>
<svg style="left:1242px;top:700px" width="19" height="19" viewBox="0 0 19 19"><path d="M10 1C6.9 1 5.4 3.5 5.4 6.6V10.4Q5.4 12.6 2.6 14.7H17.4Q14.6 12.6 14.6 10.4V6.6C14.6 3.5 13.1 1 10 1Z" fill="none" stroke="#4a4a4a" stroke-width="1.5" stroke-linejoin="round"/><path d="M8.6 15.3A1.4 1.4 0 0 0 11.4 15.3" fill="none" stroke="#4a4a4a" stroke-width="1.3"/></svg>
</body></html>
